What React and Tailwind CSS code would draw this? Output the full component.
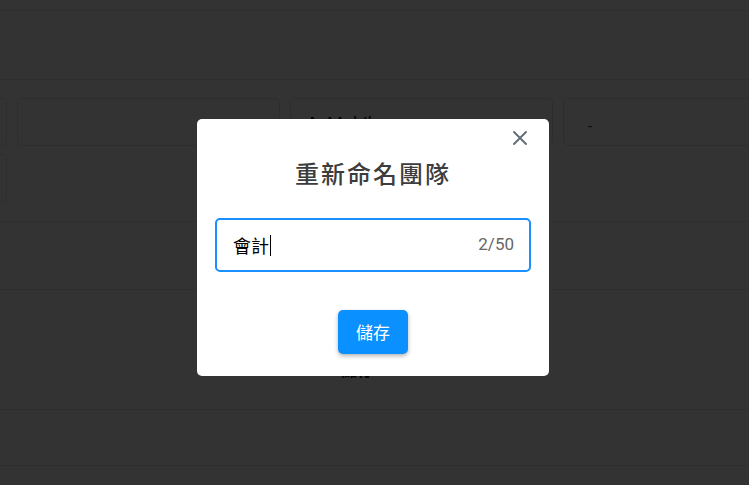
import React from "react";

function Card({ children, className = "" }) {
  return (
    <div className={"h-[48px] w-[263px] shrink-0 rounded-[5px] border border-[#e2e2e2] bg-white " + className}>
      {children}
    </div>
  );
}

export default function App() {
  return (
    <div className="relative h-[485px] w-[749px] overflow-hidden bg-white font-['Roboto','Noto_Sans_CJK_TC',sans-serif]">
      {/* underlying page */}
      <div className="h-[11px] border-b border-[#e8e8e8]" />
      <div className="h-[69px] border-b border-[#e8e8e8]" />
      <div className="ml-[-256px] flex gap-[10px] pt-[18px]">
        <Card />
        <Card />
        <Card className="flex items-start px-3 pt-[14px]">
          <svg width="14" height="12" viewBox="0 0 14 12" className="mt-[2px]">
            <rect x="0" y="8" width="3" height="4" fill="#111" />
            <rect x="4" y="5" width="3" height="7" fill="#111" />
            <rect x="8" y="2" width="3" height="10" fill="#111" />
          </svg>
          <span className="ml-[10px] text-[18px] leading-[22px] text-[#111]">Mobile</span>
        </Card>
        <Card className="flex items-center px-[24px] pt-[8px] text-[14px] text-[#333]">-</Card>
      </div>
      <div className="ml-[-256px] mt-[8px] flex">
        <Card />
      </div>
      <div className="mt-[19px] h-[69px] border-b border-t border-[#e8e8e8]" />
      <div className="flex h-[120px] items-end border-b border-[#e8e8e8] pb-[26px] pl-[340px]">
        <span className="text-[17px] font-bold text-[#111]">儲存</span>
      </div>
      <div className="h-[56px] border-b border-[#e8e8e8]" />

      {/* overlay */}
      <div className="absolute inset-0 bg-black/80" />

      {/* modal */}
      <div className="absolute left-[197px] top-[119px] flex h-[257px] w-[352px] flex-col rounded-[5px] bg-white">
        <button className="absolute right-[22px] top-[12px] flex h-[14px] w-[14px] items-center justify-center">
          <svg width="14" height="14" viewBox="0 0 14 14">
            <path d="M1 1L13 13M13 1L1 13" stroke="#606a72" strokeWidth="1.8" strokeLinecap="round" />
          </svg>
        </button>
        <h2 className="pt-[38px] text-center text-[24px] font-medium leading-[32px] tracking-[2px] text-[#3d3d3d] font-['Noto_Sans_CJK_TC',sans-serif]">
          重新命名團隊
        </h2>
        <div className="mx-[18px] mt-[29px] flex h-[54px] items-center rounded-[5px] border-2 border-[#1a8fff] pl-[16px] pr-[15px]">
          <span className="text-[18px] leading-[24px] text-black font-['Noto_Sans_CJK_TC',sans-serif]">會計</span>
          <span className="ml-[1px] h-[21px] w-px bg-black" />
          <span className="ml-auto text-[17px] text-[#666]">2/50</span>
        </div>
        <button className="mx-auto mt-[38px] flex h-[44px] w-[70px] items-center justify-center rounded-[5px] bg-[#0a90ff] text-[17px] text-white shadow-[0_2px_4px_rgba(0,0,0,0.3)] font-['Noto_Sans_CJK_TC',sans-serif]">
          儲存
        </button>
      </div>
    </div>
  );
}
